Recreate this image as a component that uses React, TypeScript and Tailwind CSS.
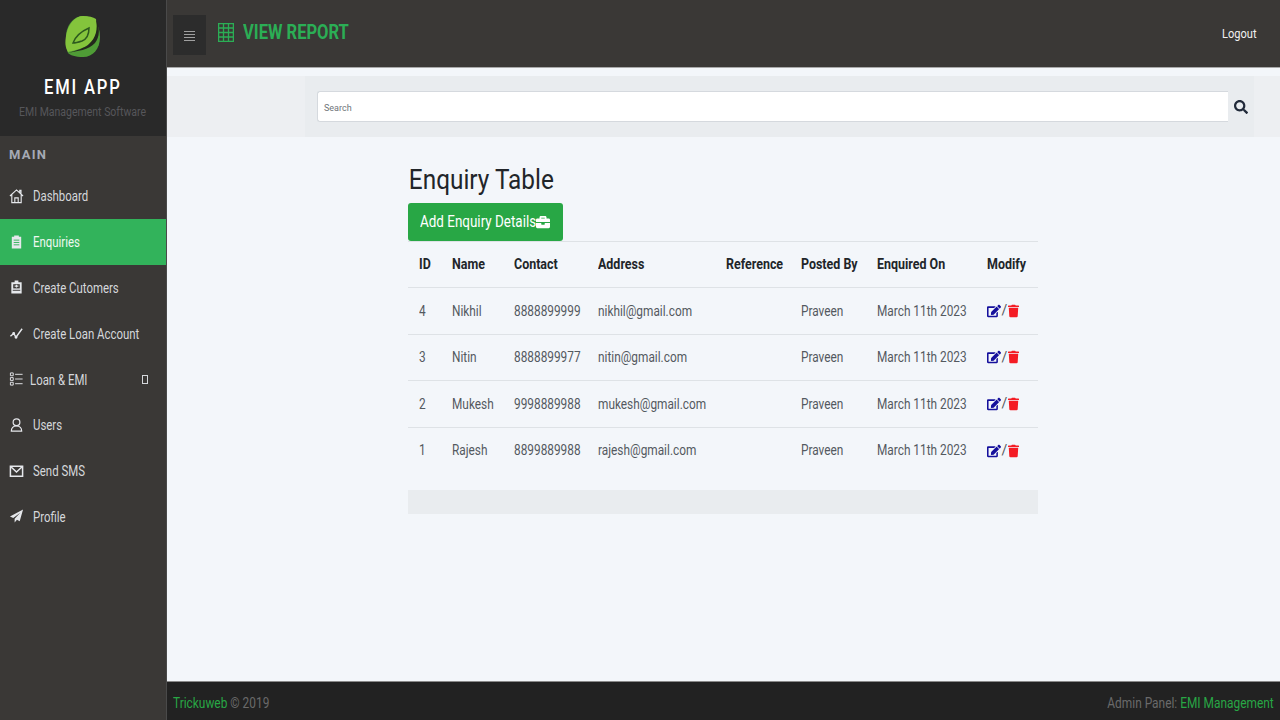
import { FaBriefcase, FaEdit, FaSearch, FaTrash } from "react-icons/fa";
import { ReactNode } from "react";

const ic = "w-[15px] h-[16px]";

const HomeIcon = () => (
  <svg viewBox="0 0 16 16" className={ic} fill="none" stroke="currentColor" strokeWidth="1.2">
    <path d="M1 8 8 1.5 15 8M3 6.5V15h10V6.5M6.2 15v-5h3.6v5M11.5 4.8V2h1.3v4" />
  </svg>
);
const ClipboardIcon = () => (
  <svg viewBox="0 0 16 16" className={ic}>
    <path d="M3 2.5h2.5V1h5v1.5H13V15H3Z" fill="currentColor" />
    <path d="M5 6h6M5 8.5h6M5 11h6" stroke="#32b35b" strokeWidth="1" />
  </svg>
);
const BadgeIcon = () => (
  <svg viewBox="0 0 16 16" className={ic}>
    <path d="M2.5 3h3.5V1h4v2h3.5v12h-11Z" fill="currentColor" />
    <path d="M4.5 5h7v4.5h-7Z" fill="#3a3836" />
    <path d="M8 5.5v3M6 7h4" stroke="currentColor" strokeWidth="1.2" />
    <path d="M4 11.5h8" stroke="#3a3836" strokeWidth="1" />
  </svg>
);
const LineIcon = () => (
  <svg viewBox="0 0 16 16" className={ic} fill="none" stroke="currentColor" strokeWidth="1.5">
    <path d="M1.5 11.5 5 8.5l2.5 4L14 3.5" />
    <circle cx="5" cy="8.5" r="0.8" fill="currentColor" />
    <circle cx="7.5" cy="12.5" r="0.8" fill="currentColor" />
  </svg>
);
const ListIcon = () => (
  <svg viewBox="0 0 16 16" className={ic} fill="none" stroke="currentColor" strokeWidth="1">
    <path d="M1.5 1.5h3v3h-3ZM1.5 6.5h3v3h-3ZM1.5 11.5h3v3h-3ZM6.5 3h8M6.5 8h8M6.5 13h8" />
  </svg>
);
const UserIcon = () => (
  <svg viewBox="0 0 16 16" className={ic} fill="none" stroke="currentColor" strokeWidth="1.3">
    <circle cx="8" cy="5" r="3.6" />
    <path d="M2.5 14.5c0-3 2-5.5 5.5-5.5s5.5 2.5 5.5 5.5Z" />
  </svg>
);
const MailIcon = () => (
  <svg viewBox="0 0 16 16" className={ic} fill="none" stroke="currentColor" strokeWidth="1.6">
    <path d="M1.5 3h13v10.5h-13ZM2 3.5l6 5.5 6-5.5" />
  </svg>
);
const PlaneIcon = () => (
  <svg viewBox="0 0 16 16" className={ic} fill="currentColor">
    <path d="M15 1 1 8.5l3.5 1.6L12 4.5 6 11v4l2.5-3 2.9 1.6Z" />
  </svg>
);
const GridIcon = () => (
  <svg viewBox="0 0 16 19" className="h-[19px] w-[16px]" fill="none" stroke="currentColor" strokeWidth="1.3">
    <path d="M.6.6h14.8v17.8H.6ZM5.5.6v17.8M10.5.6v17.8M.6 5h14.8M.6 9.5h14.8M.6 14h14.8" />
  </svg>
);

const menu: { label: string; icon: ReactNode; active?: boolean; sub?: boolean }[] = [
  { label: "Dashboard", icon: <HomeIcon /> },
  { label: "Enquiries", icon: <ClipboardIcon />, active: true },
  { label: "Create Cutomers", icon: <BadgeIcon /> },
  { label: "Create Loan Account", icon: <LineIcon /> },
  { label: "Loan & EMI", icon: <ListIcon />, sub: true },
  { label: "Users", icon: <UserIcon /> },
  { label: "Send SMS", icon: <MailIcon /> },
  { label: "Profile", icon: <PlaneIcon /> },
];

const rows = [
  { id: 4, name: "Nikhil", contact: "8888899999", address: "nikhil@gmail.com" },
  { id: 3, name: "Nitin", contact: "8888899977", address: "nitin@gmail.com" },
  { id: 2, name: "Mukesh", contact: "9998889988", address: "mukesh@gmail.com" },
  { id: 1, name: "Rajesh", contact: "8899889988", address: "rajesh@gmail.com" },
];

const headers = ["ID", "Name", "Contact", "Address", "Reference", "Posted By", "Enquired On", "Modify"];

function Leaf() {
  return (
    <svg viewBox="0 0 36 43" className="h-[43px] w-[36px]">
      <path d="M18 1C28 1 35 9 35 22C35 34 28 42 18 42C10 42 5 40 3 38C1 33 1 27 1 22C1 10 9 1 18 1Z" fill="#4f9c36" />
      <path d="M31 4C33 14 32 24 23 30C17 34 10 35 3 37C0 32 0 27 1 21C3 9 10 1 18 1C24 1 28 2 31 4Z" fill="#84c43c" />
      <path d="M31 4C35 12 35 22 30 28C24 35 12 36 3 38C12 35 20 33 24 29C31 23 33 14 31 4Z" fill="#23281c" />
      <path d="M8 28C11 20 17 16 24 13C24 19 22 24 17 26C14 27 11 28 8 28Z" fill="none" stroke="#2d5a1e" strokeWidth="1.5" />
    </svg>
  );
}

export default function App() {
  return (
    <div className="flex h-[720px] w-[1280px] overflow-hidden bg-[#f3f6fa] font-['Roboto',sans-serif] whitespace-nowrap">
      <aside className="flex w-[167px] shrink-0 flex-col border-r border-[#4a4a4a] bg-[#3a3836]">
        <div className="flex h-[136px] flex-col items-center bg-[#292929] pt-[15px]">
          <Leaf />
          <div className="mt-[16px] scale-x-[.83] text-[20px] leading-[26px] font-medium tracking-[2.2px] text-white">EMI APP</div>
          <div className="mt-[3px] scale-x-[.875] text-[12px] leading-[18px] text-[#56565a]">EMI Management Software</div>
        </div>
        <div className="pt-[10px] pl-[9px] text-[13px] leading-[18px] font-bold tracking-[1.2px] text-[#a5a9b4]">MAIN</div>
        <nav className="mt-[9px] flex flex-col">
          {menu.map((m) => (
            <div
              key={m.label}
              className={`flex h-[45.8px] items-center pl-[9px] text-[14px] ${m.active ? "bg-[#32b35b] text-[#eef8f0]" : "text-[#d5d7db]"}`}
            >
              <span className={`flex ${m.sub ? "w-[21px]" : "w-[24px]"} shrink-0 items-center text-[#e6e8ec]`}>{m.icon}</span>
              <span className="mt-[2px] origin-left scale-x-[.815]">{m.label}</span>
              {m.sub && <span className="mr-[18px] ml-auto h-[9px] w-[6px] border border-[#d5d7db]" />}
            </div>
          ))}
        </nav>
      </aside>

      <div className="flex min-w-0 flex-1 flex-col">
        <header className="flex h-[68px] shrink-0 items-center border-b border-[#a9a9a9] bg-[#3a3836] pr-[23px] pl-[6px]">
          <button className="mt-[2px] flex h-[40px] w-[33px] items-center justify-center bg-[#2c2c2c]">
            <span className="mt-[3px] flex w-[11px] flex-col gap-[2px]">
              <i className="h-px bg-[#a0a0a0]" />
              <i className="h-px bg-[#a0a0a0]" />
              <i className="h-px bg-[#a0a0a0]" />
              <i className="h-px bg-[#a0a0a0]" />
            </span>
          </button>
          <span className="mb-[2px] ml-[12px] text-[#2bae55]"><GridIcon /></span>
          <h1 className="mb-[3px] ml-[9px] origin-left scale-x-[.827] text-[20px] font-bold text-[#2bae55]">VIEW REPORT</h1>
          <span className="mt-[1px] ml-auto origin-right scale-x-[.85] text-[13px] text-[#f1f1f1]">Logout</span>
        </header>

        <div className="mt-[8px] flex h-[61px] shrink-0 bg-[#edeff2] pl-[138px]">
          <div className="mr-[26px] flex flex-1 items-center bg-[#e9ecef] pl-[12px]">
            <div className="flex h-[31px] flex-1 items-center rounded-l-[3px] border border-r-0 border-[#d5d9de] bg-white pt-[5px] pl-[6px] text-[9px] text-[#70757a]">
              Search
            </div>
            <span className="flex w-[26px] justify-center">
              <FaSearch className="h-[14px] w-[14px] text-[#212a3a]" />
            </span>
          </div>
        </div>

        <main className="flex-1 pt-[24px] pl-[241px]">
          <div className="w-[630px]">
            <h2 className="origin-left scale-x-[.87] pl-[1px] text-[28px] leading-[38px] text-[#212529]">Enquiry Table</h2>
            <button className="mt-[4px] flex h-[38px] w-[155px] items-center rounded-[3px] bg-[#28a745] pl-[12px] text-[16px] text-white">
              <span className="flex w-[116px] shrink-0">
                <span className="origin-left scale-x-[.84]">Add Enquiry Details</span>
              </span>
              <FaBriefcase className="h-[14px] w-[14px]" />
            </button>
            <table className="w-full table-fixed border-collapse text-left text-[15px] text-[#53595f]">
              <colgroup>
                <col className="w-[33px]" />
                <col className="w-[62px]" />
                <col className="w-[84px]" />
                <col className="w-[128px]" />
                <col className="w-[75px]" />
                <col className="w-[76px]" />
                <col className="w-[110px]" />
                <col className="w-[62px]" />
              </colgroup>
              <thead>
                <tr className="h-[46px] border-y border-[#dee2e6] text-[#212529] [&>th]:pl-[11px]">
                  {headers.map((h) => (
                    <th key={h} className="font-bold">
                      <span className="inline-block origin-left scale-x-[.83]">{h}</span>
                    </th>
                  ))}
                </tr>
              </thead>
              <tbody>
                {rows.map((r, i) => (
                  <tr key={r.id} className={`h-[46.5px] [&>td]:pl-[11px] ${i < rows.length - 1 ? "border-b border-[#dee2e6]" : ""}`}>
                    {[r.id, r.name, r.contact, r.address, "", "Praveen", "March 11th 2023"].map((v, j) => (
                      <td key={j}>
                        <span className="inline-block origin-left scale-x-[.79]">{v}</span>
                      </td>
                    ))}
                    <td>
                      <span className="flex items-center">
                        <FaEdit className="h-[14px] w-[14px] text-[#15109c]" />
                        <span className="w-[7px] text-center text-[14px]">/</span>
                        <FaTrash className="h-[14px] w-[11px] text-[#f41c24]" />
                      </span>
                    </td>
                  </tr>
                ))}
              </tbody>
            </table>
            <div className="mt-[16px] h-[24px] bg-[#e9ecef]" />
          </div>
        </main>

        <footer className="flex h-[39px] shrink-0 items-center justify-between border-t border-[#8a8a8a] bg-[#222222] px-[6px] pt-[4px] text-[14px] text-[#6a6a6a]">
          <span className="origin-left scale-x-[.85]"><span className="text-[#28a745]">Trickuweb</span> © 2019</span>
          <span className="origin-right scale-x-[.85]">Admin Panel: <span className="text-[#28a745]">EMI Management</span></span>
        </footer>
      </div>
    </div>
  );
}
